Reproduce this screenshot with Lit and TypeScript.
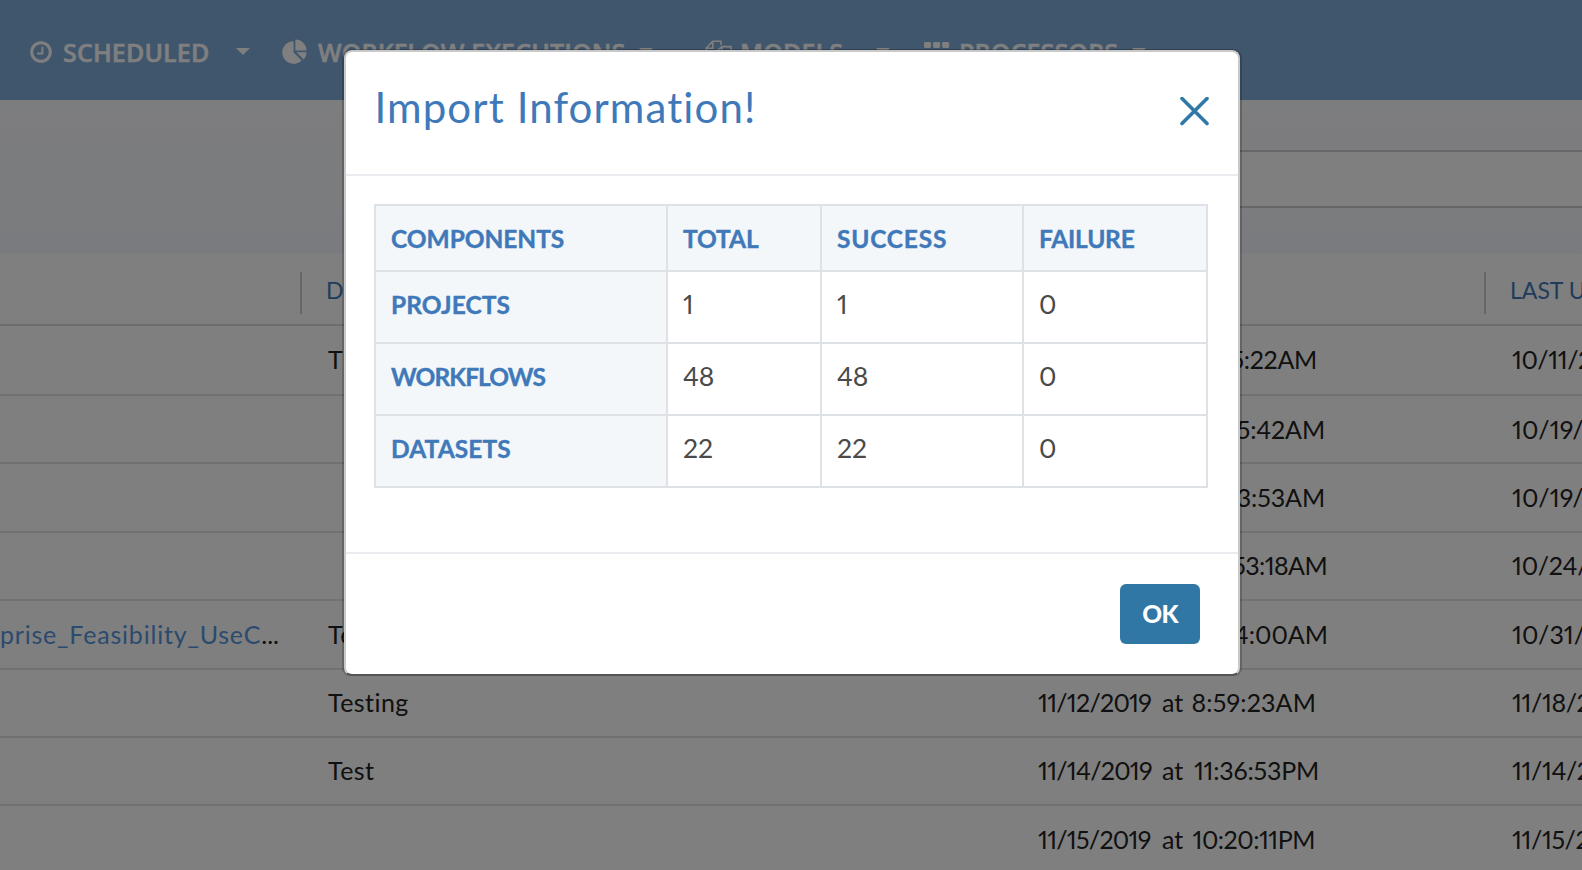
import { LitElement, html, css, svg, nothing } from "lit";
import { customElement } from "lit/decorators.js";
import { styleMap } from "lit/directives/style-map.js";

interface Row {
  name?: string;
  desc?: string;
  date: string;
  time: string;
  timeSpacing: number;
  updated: string;
  updatedSpacing: number;
  end: number;
}

// `end` is the ragged right edge of the created column; spacings tighten the digits.
const ROWS: Row[] = [
  { desc: "This is a test", date: "10/11/2019", time: "9:35:22AM", timeSpacing: -0.3, updated: "10/11/2019", updatedSpacing: -0.4, end: 279 },
  { date: "10/19/2019", time: "4:45:42AM", timeSpacing: -0.1, updated: "10/19/2019", updatedSpacing: 0.1, end: 287 },
  { date: "10/19/2019", time: "5:03:53AM", timeSpacing: -0.1, updated: "10/19/2019", updatedSpacing: 0.1, end: 287 },
  { date: "10/24/2019", time: "8:53:18AM", timeSpacing: -0.6, updated: "10/24/2019", updatedSpacing: -0.2, end: 289 },
  { name: "Enterprise_Feasibility_UseC", desc: "Testing", date: "10/31/2019", time: "6:04:00AM", timeSpacing: 0, updated: "10/31/2019", updatedSpacing: 0, end: 290 },
  { desc: "Testing", date: "11/12/2019", time: "8:59:23AM", timeSpacing: 0.15, updated: "11/18/2019", updatedSpacing: -0.4, end: 278 },
  { desc: "Test", date: "11/14/2019", time: "11:36:53PM", timeSpacing: -0.2, updated: "11/14/2019", updatedSpacing: -0.4, end: 281 },
  { date: "11/15/2019", time: "10:20:11PM", timeSpacing: -0.5, updated: "11/15/2019", updatedSpacing: -0.4, end: 277 },
];

const RESULTS: [string, string, string, string][] = [
  ["PROJECTS", "1", "1", "0"],
  ["WORKFLOWS", "48", "48", "0"],
  ["DATASETS", "22", "22", "0"],
];

const SPACING: Record<string, number> = {
  COMPONENTS: -0.05, TOTAL: -0.1, SUCCESS: 0.8, FAILURE: -0.2,
  PROJECTS: 0.1, WORKFLOWS: -0.9, DATASETS: 0.1,
};

const clock = svg`<circle cx="13" cy="13" r="9.3" fill="none" stroke="currentColor" stroke-width="3"/><path d="M14.4 7.7v6.8H9" fill="none" stroke="currentColor" stroke-width="2"/>`;
const pie = svg`<path d="M12.6 2.2V13.4L20.6 21.4A11.3 11.3 0 1 1 12.6 2.2Z" fill="currentColor"/><path d="M14.4 .6A11.2 11.2 0 0 1 25.6 11.4H14.4Z" fill="currentColor"/><path d="M15.4 13.2H25.6A11 11 0 0 1 22.8 20.4Z" fill="currentColor"/>`;
const files = svg`<path d="M16 6V2.2H7.6L1.2 9.2V20H10M7.8 2.2V9.2H1.2M17 7.6H26V25H11V13ZM17 7.6V13H11" fill="none" stroke="currentColor" stroke-width="1.6"/>`;
const grid = svg`${[0, 9.1, 18.2].map((x) => [3, 11.2, 19.4].map((y) => svg`<rect x=${x} y=${y} width="7" height="6" rx="1.4" fill="currentColor"/>`))}`;

@customElement("app-root")
export class AppRoot extends LitElement {
  static styles = css`
    :host { display: block; position: relative; width: 1582px; height: 870px; overflow: hidden; background: #fff; color: #222; font-family: Lato, "Open Sans", sans-serif; font-size: 25px; line-height: 30px; font-variant-numeric: proportional-nums; }
    * { box-sizing: border-box; }
    .nav { height: 100px; background: #80acda; color: #fff; display: flex; padding: 37px 0 0 28px; font: 600 25px/30px "Open Sans", sans-serif; white-space: nowrap; letter-spacing: 0.15px; }
    .item { display: flex; flex: none; }
    .item svg { width: 26px; height: 26px; flex: none; overflow: visible; margin-top: 2px; }
    .item span { margin-left: 9px; -webkit-text-stroke: 0.5px currentColor; }
    .caret { border: 7px solid transparent; border-top-color: #fff; border-bottom: 0; width: 0; height: 7px; margin-top: 11px; }
    .i1 { width: 253px; } .i1 .caret { margin-left: 27px; }
    .i2 { width: 424px; } .i2 .caret { margin-left: 14px; }
    .i2 span { margin-left: 11px; }
    .i3 { width: 219px; } .i3 .caret { margin-left: 33px; }
    .i4 .caret { margin-left: 14px; }
    .i4 span { margin-left: 9px; }
    .band { height: 154px; padding-top: 50px; background: linear-gradient(#f9fafc, #f4f7fc); }
    .search { margin-left: 700px; height: 58px; border: 2px solid #cdcdcd; border-right: 0; background: #fff; }
    .cols { display: grid; grid-template-columns: 300px 738px 446px 98px; }
    .head { height: 72px; border-bottom: 2px solid #dadada; color: #3f78b8; font-size: 23px; align-items: start; padding-top: 18px; }
    .head .h { height: 42px; border-left: 2px solid #cfcfcf; padding: 3px 0 0 24px; white-space: nowrap; overflow: hidden; }
    .row { height: 68.4px; border-bottom: 2px solid #e3e3e3; white-space: nowrap; padding-top: 17.5px; }
    .row.first { height: 70px; padding-top: 18px; }
    .name { display: flex; justify-content: flex-end; width: 279px; overflow: hidden; }
    .link { color: #5796dc; letter-spacing: 0.8px; }
    .desc { padding-left: 28px; letter-spacing: 0.45px; }
    .created { display: flex; justify-content: space-between; }
    .date { width: 124px; letter-spacing: -0.75px; }
    .at { flex: 1; }
    .updated { padding-left: 28px; overflow: hidden; }
    .overlay { position: absolute; inset: 0; background: rgba(0, 0, 0, 0.5); padding: 50px 342px 0 344px; }
    .modal { height: 626px; background: #fff; border: 2px solid #c9c9c9; border-bottom-color: #555; border-radius: 8px; box-shadow: 2px 0 0 rgba(0, 0, 0, 0.2), -2px 0 0 rgba(0, 0, 0, 0.2), 0 -1px 0 rgba(0, 0, 0, 0.25); display: flex; flex-direction: column; }
    .top { height: 124px; border-bottom: 2px solid #ebebf0; padding: 30px 29px 0 28.5px; display: flex; justify-content: space-between; color: #4079b9; }
    h1 { margin: 0; font-weight: 400; font-size: 42px; line-height: 50px; letter-spacing: 1.1px; }
    .close { width: 29px; height: 29px; margin-top: 15px; }
    .body { height: 378px; border-bottom: 2px solid #ebebf0; padding: 28px; }
    table { width: 834px; border-collapse: collapse; table-layout: fixed; color: #4a4a4a; font-size: 26.5px; }
    th, td { border: 2px solid #dee2e6; padding: 16px 0 0 15px; text-align: left; height: 72px; vertical-align: top; line-height: 32px; }
    th { background: #f3f7fa; color: #4079b9; font-size: 24.5px; font-weight: 700; -webkit-text-stroke: 0.4px currentColor; }
    thead th { height: 66px; padding-top: 17px; }
    tbody th { padding-top: 17px; }
    .foot { display: flex; justify-content: flex-end; padding: 30px 38px 0 0; }
    button { width: 80px; height: 60px; border: 0; border-radius: 6px; background: #3077a6; color: #fff; font: 900 24.5px/60px Lato, sans-serif; letter-spacing: -0.8px; padding: 0; }
  `;

  private nav(cls: string, icon: unknown, label: string) {
    return html`<div class="item ${cls}"><svg viewBox="0 0 26 26">${icon}</svg><span>${label}</span><i class="caret"></i></div>`;
  }

  private row(r: Row, i: number) {
    return html`<div class="cols row ${i === 0 ? "first" : ""}">
      <div class="name">${r.name ? html`<span class="link">${r.name}</span>...` : nothing}</div>
      <div class="desc">${r.desc ?? nothing}</div>
      <div class="created" style=${styleMap({ width: `${r.end}px` })}>
        <span class="date">${r.date}</span><span class="at">at</span>
        <span style=${styleMap({ letterSpacing: `${r.timeSpacing}px` })}>${r.time}</span>
      </div>
      <div class="updated" style=${styleMap({ letterSpacing: `${r.updatedSpacing}px` })}>${r.updated}</div>
    </div>`;
  }

  private th(t: string) {
    return html`<th style=${styleMap({ letterSpacing: `${SPACING[t]}px` })}>${t}</th>`;
  }

  render() {
    return html`
      <nav class="nav">
        ${this.nav("i1", clock, "SCHEDULED")}${this.nav("i2", pie, "WORKFLOW EXECUTIONS")}
        ${this.nav("i3", files, "MODELS")}${this.nav("i4", grid, "PROCESSORS")}
      </nav>
      <div class="band"><div class="search"></div></div>
      <div class="cols head"><div></div><div class="h">DESCRIPTION</div><div></div><div class="h">LAST UPDATED</div></div>
      ${ROWS.map((r, i) => this.row(r, i))}
      <div class="overlay">
        <section class="modal">
          <header class="top">
            <h1>Import Information!</h1>
            <svg class="close" viewBox="0 0 29 29"><path d="M2 1.5 27 26.5M27 1.5 2 26.5" stroke="#2f78a8" stroke-width="3.6" stroke-linecap="round"/></svg>
          </header>
          <div class="body">
            <table>
              <colgroup><col style="width:292px"><col style="width:154px"><col style="width:202px"><col></colgroup>
              <thead><tr>${["COMPONENTS", "TOTAL", "SUCCESS", "FAILURE"].map((t) => this.th(t))}</tr></thead>
              <tbody>${RESULTS.map(([n, ...v]) => html`<tr>${this.th(n)}${v.map((x) => html`<td>${x}</td>`)}</tr>`)}</tbody>
            </table>
          </div>
          <footer class="foot"><button>OK</button></footer>
        </section>
      </div>`;
  }
}
